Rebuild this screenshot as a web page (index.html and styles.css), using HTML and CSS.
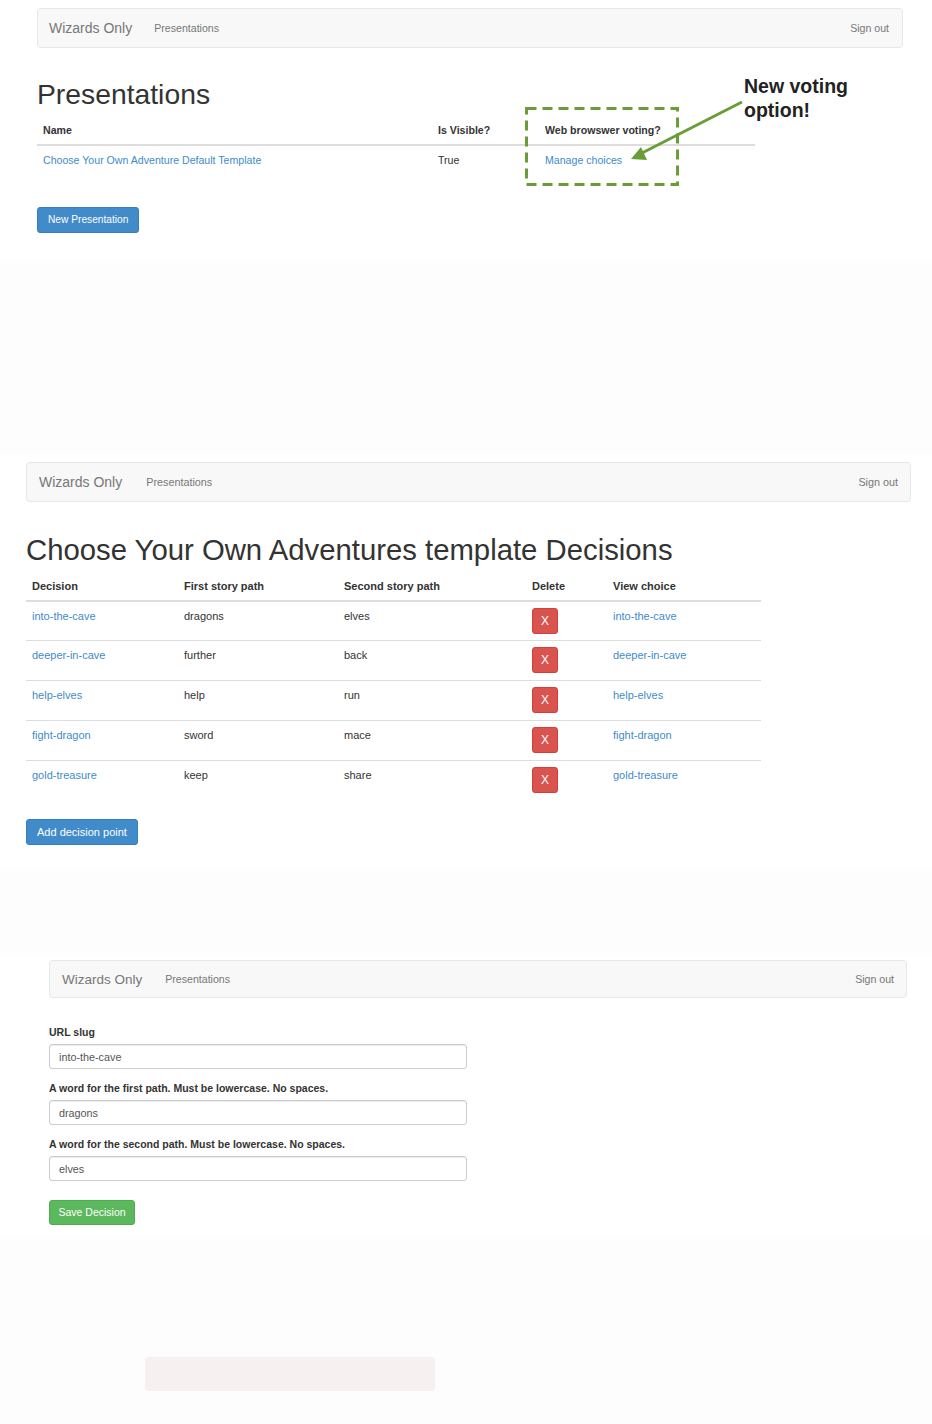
FILE: index.html
```html
<!DOCTYPE html>
<html lang="en">

<head>
    <meta charset="UTF-8" />
    <meta name="viewport" content="width=device-width, initial-scale=1.0" />
    <title>Wizards Only - Presentations</title>
    <link rel="stylesheet" href="styles.css">
</head>

<body>

    <!-- 1: presentation list with the annotation -->
    <section class="shot shot-list">
        <nav class="navbar">
            <span class="brand">Wizards Only</span>
            <a class="nav-link" href="#">Presentations</a>
            <a class="nav-link nav-right" href="#">Sign out</a>
        </nav>

        <h1>Presentations</h1>

        <table class="table">
            <thead>
                <tr>
                    <th class="col-name">Name</th>
                    <th class="col-visible">Is Visible?</th>
                    <th class="col-voting">Web browswer voting?</th>
                </tr>
            </thead>
            <tbody>
                <tr>
                    <td><a href="#">Choose Your Own Adventure Default Template</a></td>
                    <td>True</td>
                    <td><a href="#">Manage choices</a></td>
                </tr>
            </tbody>
        </table>

        <a class="btn btn-primary btn-new" href="#">New Presentation</a>

        <svg class="callout" width="932" height="260" viewBox="0 0 932 260">
            <rect x="526.5" y="108.5" width="151" height="76" fill="none" stroke="#6a9c37" stroke-width="3" stroke-dasharray="10 6" />
            <line x1="742" y1="102" x2="642" y2="153" stroke="#6a9c37" stroke-width="3" />
            <polygon points="631,159 641,147 647,160" fill="#6a9c37" />
        </svg>
        <p class="callout-text">New voting<br>option!</p>
    </section>

    <!-- 2: decisions of a template -->
    <section class="shot shot-decisions">
        <nav class="navbar">
            <span class="brand">Wizards Only</span>
            <a class="nav-link" href="#">Presentations</a>
            <a class="nav-link nav-right" href="#">Sign out</a>
        </nav>

        <h1>Choose Your Own Adventures template Decisions</h1>

        <table class="table">
            <thead>
                <tr>
                    <th class="col-decision">Decision</th>
                    <th class="col-first">First story path</th>
                    <th class="col-second">Second story path</th>
                    <th class="col-delete">Delete</th>
                    <th class="col-view">View choice</th>
                </tr>
            </thead>
            <tbody>
                <tr>
                    <td><a href="#">into-the-cave</a></td>
                    <td>dragons</td>
                    <td>elves</td>
                    <td><button class="btn-delete">X</button></td>
                    <td><a href="#">into-the-cave</a></td>
                </tr>
                <tr>
                    <td><a href="#">deeper-in-cave</a></td>
                    <td>further</td>
                    <td>back</td>
                    <td><button class="btn-delete">X</button></td>
                    <td><a href="#">deeper-in-cave</a></td>
                </tr>
                <tr>
                    <td><a href="#">help-elves</a></td>
                    <td>help</td>
                    <td>run</td>
                    <td><button class="btn-delete">X</button></td>
                    <td><a href="#">help-elves</a></td>
                </tr>
                <tr>
                    <td><a href="#">fight-dragon</a></td>
                    <td>sword</td>
                    <td>mace</td>
                    <td><button class="btn-delete">X</button></td>
                    <td><a href="#">fight-dragon</a></td>
                </tr>
                <tr>
                    <td><a href="#">gold-treasure</a></td>
                    <td>keep</td>
                    <td>share</td>
                    <td><button class="btn-delete">X</button></td>
                    <td><a href="#">gold-treasure</a></td>
                </tr>
            </tbody>
        </table>

        <a class="btn btn-primary btn-add" href="#">Add decision point</a>
    </section>

    <!-- 3: edit one decision -->
    <section class="shot shot-form">
        <nav class="navbar">
            <span class="brand">Wizards Only</span>
            <a class="nav-link" href="#">Presentations</a>
            <a class="nav-link nav-right" href="#">Sign out</a>
        </nav>

        <form class="decision-form" action="#" method="post">
            <div class="form-group">
                <label for="slug">URL slug</label>
                <input id="slug" name="slug" value="into-the-cave">
            </div>
            <div class="form-group">
                <label for="first_path">A word for the first path. Must be lowercase. No spaces.</label>
                <input id="first_path" name="first_path" value="dragons">
            </div>
            <div class="form-group">
                <label for="second_path">A word for the second path. Must be lowercase. No spaces.</label>
                <input id="second_path" name="second_path" value="elves">
            </div>
            <button class="btn btn-success" type="submit">Save Decision</button>
        </form>
    </section>

    <div class="ghost-bar"></div>

</body>

</html>
```

FILE: styles.css
```css
* {
    margin: 0;
    padding: 0;
    box-sizing: border-box;
}

body {
    font-family: "Liberation Sans", Arial, sans-serif;
    color: #333;
    background: #fdfdfd;
    width: 932px;
}

a {
    color: #428bca;
    text-decoration: none;
}

.shot {
    background: #fff;
    position: relative;
}

/* navbar */
.navbar {
    display: flex;
    align-items: center;
    height: 40px;
    background: #f8f8f8;
    border: 1px solid #e7e7e7;
    border-radius: 4px;
    padding: 0 12px;
}

.brand {
    font-size: 14px;
    color: #777;
}

.nav-link {
    font-size: 10.6px;
    color: #777;
    margin-left: 23px;
}

.navbar .nav-link.nav-right {
    margin-left: auto;
}

h1 {
    font-weight: 500;
    color: #333;
}

/* tables */
.table {
    border-collapse: collapse;
    table-layout: fixed;
}

.table th {
    text-align: left;
    font-weight: bold;
    line-height: 16px;
    padding: 6px;
    border-bottom: 2px solid #ddd;
}

.table td {
    line-height: 16px;
    padding: 6px 6px 7px;
    vertical-align: top;
    border-top: 1px solid #ddd;
}

.table tbody tr:first-child td {
    border-top: none;
    padding-bottom: 6px;
}

/* buttons */
.btn {
    display: inline-block;
    height: 26px;
    line-height: 24px;
    padding: 0 10px;
    border: 1px solid transparent;
    border-radius: 3px;
    color: #fff;
    font-family: inherit;
}

.btn-primary {
    background: #428bca;
    border-color: #357ebd;
}

.btn-success {
    background: #5cb85c;
    border-color: #4cae4c;
}

.btn-delete {
    display: block;
    width: 26px;
    height: 26px;
    background: #d9534f;
    border: 1px solid #d43f3a;
    border-radius: 3px;
    color: #fff;
    font-family: inherit;
    font-size: 12px;
}

/* 1: list */
.shot-list {
    height: 260px;
    padding: 8px 0 0 37px;
}

.shot-list .navbar {
    width: 866px;
    padding-left: 11px;
    padding-right: 13px;
}

.shot-list .nav-link {
    margin-left: 22px;
}

.shot-list h1 {
    font-size: 28.3px;
    line-height: 31px;
    margin: 31px 0 6px;
}

.shot-list .table {
    width: 718px;
    font-size: 10.6px;
}

.col-name { width: 395px; }
.col-visible { width: 107px; }
.col-voting { width: 216px; }

.btn-new {
    font-size: 10.2px;
    margin-top: 33px;
}

.callout {
    position: absolute;
    left: 0;
    top: 0;
    pointer-events: none;
}

.callout-text {
    position: absolute;
    left: 744px;
    top: 74px;
    font-size: 19.5px;
    line-height: 24px;
    font-weight: bold;
    color: #222;
}

/* 2: decisions */
.shot-decisions {
    margin-top: 195px;
    height: 413px;
    padding: 7px 0 0 26px;
}

.shot-decisions .navbar {
    width: 885px;
}

.shot-decisions .nav-link {
    font-size: 10.8px;
    margin-left: 24px;
}

.shot-decisions h1 {
    font-size: 29.3px;
    line-height: 32px;
    margin: 32px 0 6px;
}

.shot-decisions .table {
    width: 735px;
    font-size: 11px;
}

.col-decision { width: 152px; }
.col-first { width: 160px; }
.col-second { width: 188px; }
.col-delete { width: 81px; }
.col-view { width: 154px; }

.btn-add {
    font-size: 11px;
    margin-top: 19px;
}

/* 3: form */
.shot-form {
    margin-top: 87px;
    height: 280px;
    padding: 5px 0 0 49px;
}

.shot-form .navbar {
    width: 858px;
    height: 38px;
}

.shot-form .brand {
    font-size: 13.5px;
}

.decision-form {
    margin-top: 27px;
}

.form-group {
    margin-bottom: 12px;
}

.form-group label {
    display: block;
    font-size: 10.5px;
    line-height: 14px;
    font-weight: bold;
    margin-bottom: 5px;
}

.form-group input {
    display: block;
    width: 418px;
    height: 25px;
    padding: 0 9px;
    border: 1px solid #ccc;
    border-radius: 3px;
    box-shadow: inset 0 1px 1px rgba(0, 0, 0, 0.075);
    font-family: inherit;
    font-size: 10.8px;
    color: #555;
}

.shot-form .btn {
    height: 25px;
    line-height: 23px;
    padding: 0 8.5px;
    font-size: 10.5px;
    margin-top: 7px;
}

.ghost-bar {
    width: 290px;
    height: 34px;
    margin: 122px 0 0 145px;
    background: #f7f0f1;
    border-radius: 4px;
}
```
